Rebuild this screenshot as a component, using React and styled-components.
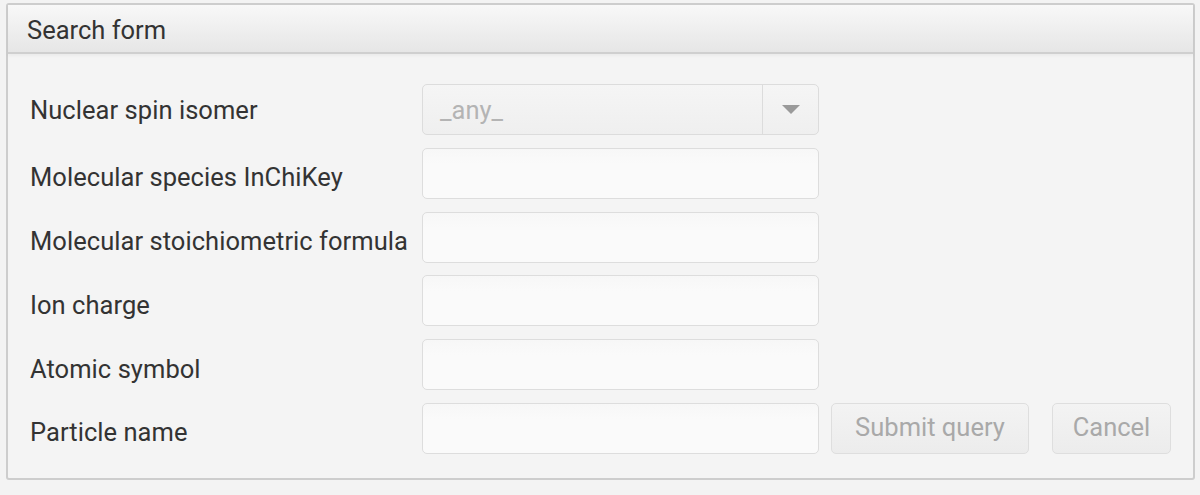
import { Fragment } from "react";
import styled, { createGlobalStyle } from "styled-components";

const GlobalStyle = createGlobalStyle`
  html, body {
    margin: 0;
    padding: 0;
    background: #f3f3f3;
  }
  body {
    font-family: Roboto, "Liberation Sans", sans-serif;
  }
`;

const Page = styled.div`
  width: 1200px;
  height: 495px;
  padding: 3px 5px 0 6px;
  box-sizing: border-box;
`;

const Panel = styled.div`
  width: 1189px;
  height: 477px;
  box-sizing: border-box;
  border: 2px solid #cdcdcd;
  border-radius: 3px;
  background: #f4f4f4;
  display: flex;
  flex-direction: column;
`;

const PanelHeader = styled.div`
  height: 49px;
  box-sizing: border-box;
  border-bottom: 2px solid #cfcfcf;
  background: linear-gradient(#f8f8f8, #e6e6e6);
  display: flex;
  align-items: center;
  padding: 2px 0 0 19px;
  font-size: 25.5px;
  color: #333;
  box-shadow: 0 2px 3px rgba(0, 0, 0, 0.04);
`;

const Form = styled.div`
  display: grid;
  grid-template-columns: 392px 397px auto;
  grid-auto-rows: 51px;
  row-gap: 12.8px;
  padding: 30px 0 0 22px;
`;

const Label = styled.div`
  display: flex;
  align-items: center;
  padding-top: ${(p) => (p.$first ? "0" : "8px")};
  font-size: 25.5px;
  color: #333;
  white-space: nowrap;
  letter-spacing: 0.05px;
`;

const Field = styled.div`
  box-sizing: border-box;
  border: 1.5px solid #dddddd;
  border-radius: 5px;
  background: linear-gradient(#f7f7f7, #fafafa 30%);
`;

const Select = styled.div`
  box-sizing: border-box;
  border: 1.5px solid #dcdcdc;
  border-radius: 5px;
  background: linear-gradient(#f5f5f5, #efefef);
  display: flex;
  align-items: stretch;
`;

const SelectValue = styled.div`
  flex: 1;
  display: flex;
  align-items: center;
  padding-left: 17px;
  font-size: 25.5px;
  color: #b4b4b4;
`;

const SelectArrow = styled.div`
  width: 55px;
  border-left: 1.5px solid #dcdcdc;
  display: flex;
  align-items: center;
  justify-content: center;
`;

const Buttons = styled.div`
  display: flex;
  gap: 23px;
  padding-left: 12px;
`;

const Button = styled.div`
  box-sizing: border-box;
  width: ${(p) => p.$w}px;
  height: 51px;
  border: 1.5px solid #dedede;
  border-radius: 5px;
  background: linear-gradient(#f3f3f3, #ececec);
  display: flex;
  align-items: center;
  justify-content: center;
  padding-bottom: 2px;
  font-size: 25.5px;
  color: #a9a9a9;
`;

const rows = [
  "Molecular species InChiKey",
  "Molecular stoichiometric formula",
  "Ion charge",
  "Atomic symbol",
];

export default function App() {
  return (
    <Page>
      <GlobalStyle />
      <Panel>
        <PanelHeader>Search form</PanelHeader>
        <Form>
          <Label $first>Nuclear spin isomer</Label>
          <Select>
            <SelectValue>_any_</SelectValue>
            <SelectArrow>
              <svg width="18" height="10" viewBox="0 0 18 10">
                <polygon points="0,0 18,0 9,9" fill="#9a9a9a" />
              </svg>
            </SelectArrow>
          </Select>
          <div />
          {rows.map((r) => (
            <Fragment key={r}>
              <Label>{r}</Label>
              <Field />
              <div />
            </Fragment>
          ))}
          <Label>Particle name</Label>
          <Field />
          <Buttons>
            <Button $w={198}>Submit query</Button>
            <Button $w={119}>Cancel</Button>
          </Buttons>
        </Form>
      </Panel>
    </Page>
  );
}
